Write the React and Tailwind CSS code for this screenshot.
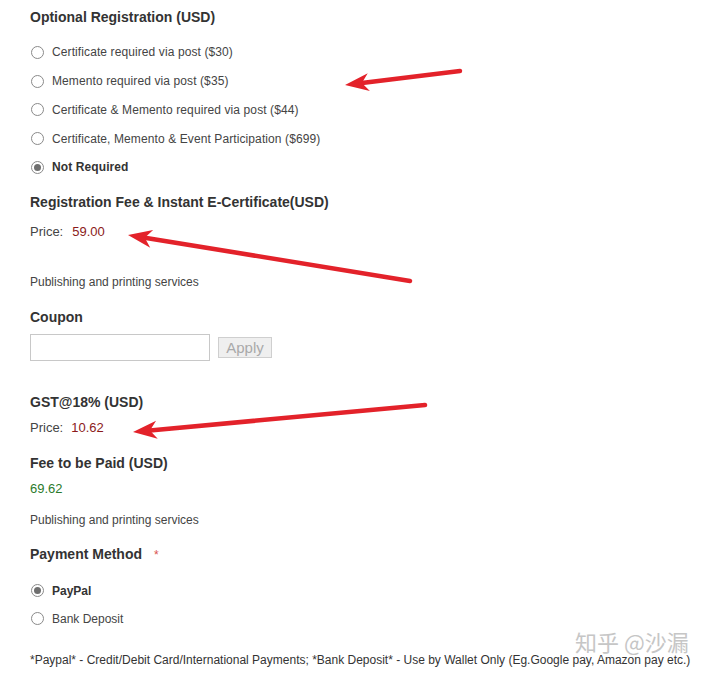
import React from "react";

function Radio({ checked, label }) {
  return (
    <div className="flex items-center h-[28.75px]">
      <span className="w-[13px] h-[13px] ml-[1px] rounded-full border border-[#8a8a8a] bg-white flex items-center justify-center shrink-0">
        {checked && <span className="w-[7px] h-[7px] rounded-full bg-[#6f6f6f]" />}
      </span>
      <span className={"ml-[8px] text-[12px] tracking-[0.1px] " + (checked ? "font-bold text-[#333]" : "text-[#444]")}>{label}</span>
    </div>
  );
}

function Arrow({ x1, y1, x2, y2 }) {
  const dx = x2 - x1, dy = y2 - y1;
  const len = Math.hypot(dx, dy);
  const ux = dx / len, uy = dy / len;
  const px = -uy, py = ux;
  const L = 24, W = 9, N = 17;
  const bx = x2 - ux * L, by = y2 - uy * L;
  const nx = x2 - ux * N, ny = y2 - uy * N;
  const pts = [
    [x2, y2],
    [bx + px * W, by + py * W],
    [nx, ny],
    [bx - px * W, by - py * W],
  ].map((p) => p.join(",")).join(" ");
  return (
    <g>
      <line x1={x1} y1={y1} x2={nx} y2={ny} stroke="#e3222a" strokeWidth="4.5" strokeLinecap="round" />
      <polygon points={pts} fill="#e3222a" />
    </g>
  );
}

export default function App() {
  const font = { fontFamily: '"Liberation Sans", Arial, sans-serif' };
  return (
    <div className="relative w-[703px] h-[675px] bg-white text-[#333] overflow-hidden" style={font}>
      <div className="pl-[30px] flex flex-col">
        <div className="mt-[7px] h-[20px] leading-[20px] text-[14px] font-bold">Optional Registration (USD)</div>
        <div className="mt-[11px] flex flex-col">
          <Radio label="Certificate required via post ($30)" />
          <Radio label="Memento required via post ($35)" />
          <Radio label="Certificate & Memento required via post ($44)" />
          <Radio label="Certificate, Memento & Event Participation ($699)" />
          <Radio checked label="Not Required" />
        </div>
        <div className="mt-[10px] h-[20px] leading-[20px] text-[14px] font-bold">Registration Fee &amp; Instant E-Certificate(USD)</div>
        <div className="mt-[10px] h-[20px] leading-[20px] text-[13px] text-[#444] flex">
          <span>Price:</span>
          <span className="ml-[9px] text-[#8b1a1a]">59.00</span>
        </div>
        <div className="mt-[31px] h-[18px] leading-[18px] text-[12px] text-[#444]">Publishing and printing services</div>
        <div className="mt-[16px] h-[20px] leading-[20px] text-[14px] font-bold">Coupon</div>
        <div className="mt-[7px] flex items-center">
          <div className="w-[180px] h-[27px] border border-[#c8c8c8] bg-white" />
          <div className="ml-[8px] w-[54px] h-[21px] border border-[#cfcfcf] bg-[#efefef] text-[#a9a9a9] text-[15px] leading-[19px] text-center">Apply</div>
        </div>
        <div className="mt-[31px] h-[20px] leading-[20px] text-[14px] font-bold">GST@18% (USD)</div>
        <div className="mt-[6px] h-[20px] leading-[20px] text-[13px] text-[#444] flex">
          <span>Price:</span>
          <span className="ml-[8px] text-[#8b1a1a]">10.62</span>
        </div>
        <div className="mt-[15px] h-[20px] leading-[20px] text-[14px] font-bold">Fee to be Paid (USD)</div>
        <div className="mt-[6px] h-[20px] leading-[20px] text-[13px] text-[#2b7a2b]">69.62</div>
        <div className="mt-[12px] h-[18px] leading-[18px] text-[12px] text-[#444]">Publishing and printing services</div>
        <div className="mt-[15px] h-[20px] leading-[20px] text-[14px] font-bold">
          Payment Method <span className="ml-[8px] font-normal text-[#d9534f] text-[12px]">*</span>
        </div>
        <div className="mt-[13px] flex flex-col">
          <div className="h-[28px] flex items-center">
            <span className="w-[13px] h-[13px] ml-[1px] rounded-full border border-[#8a8a8a] bg-white flex items-center justify-center shrink-0">
              <span className="w-[7px] h-[7px] rounded-full bg-[#6f6f6f]" />
            </span>
            <span className="ml-[8px] text-[12px] font-bold text-[#333]">PayPal</span>
          </div>
          <div className="h-[28px] flex items-center">
            <span className="w-[13px] h-[13px] ml-[1px] rounded-full border border-[#8a8a8a] bg-white shrink-0" />
            <span className="ml-[8px] text-[12px] text-[#444]">Bank Deposit</span>
          </div>
        </div>
        <div className="mt-[18px] h-[18px] leading-[18px] text-[12px] text-[#333] whitespace-nowrap">
          *Paypal* - Credit/Debit Card/International Payments; *Bank Deposit* - Use by Wallet Only (Eg.Google pay, Amazon pay etc.)
        </div>
      </div>

      <svg className="absolute inset-0 pointer-events-none" width="703" height="675">
        <Arrow x1={460} y1={71} x2={345} y2={85} />
        <Arrow x1={410} y1={281} x2={128} y2={235} />
        <Arrow x1={425} y1={405} x2={133} y2={432} />
      </svg>

      <div
        className="absolute left-[575px] top-[628px] text-[22px] leading-[26px] text-[#b8b8b8] opacity-80 whitespace-nowrap"
        style={{ fontFamily: '"Noto Sans CJK SC", "Liberation Sans", sans-serif' }}
      >
        知乎 @沙漏
      </div>
    </div>
  );
}
